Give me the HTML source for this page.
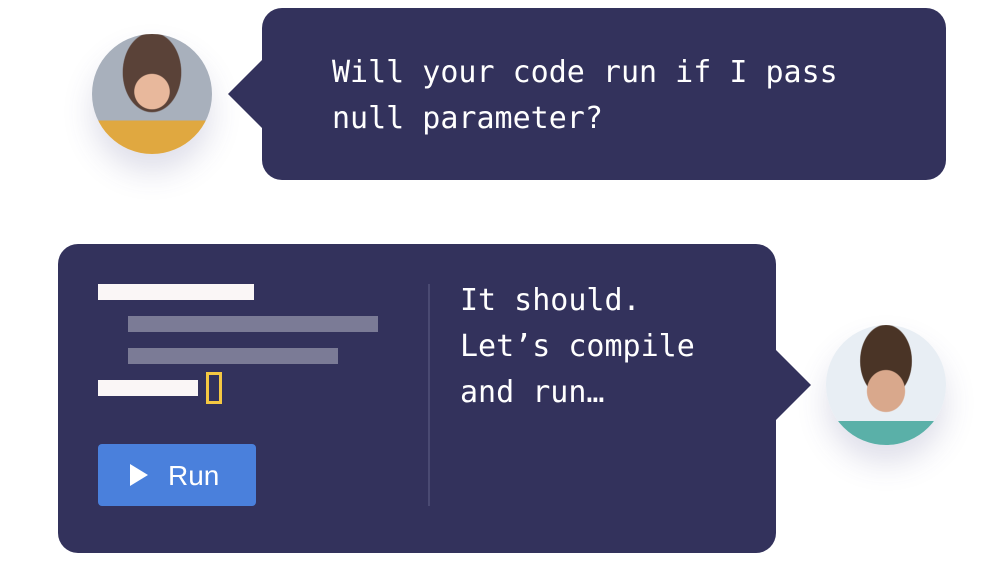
<!DOCTYPE html><html><head><style>
body{margin:0;width:1004px;height:570px;background:#fff;position:relative;overflow:hidden;font-family:"DejaVu Sans Mono","Liberation Mono",monospace}
.b{position:absolute;background:#33325c;border-radius:20px}
.a{position:absolute;width:0;height:0;border-top:35px solid transparent;border-bottom:35px solid transparent}
.t{position:absolute;color:#fff;font-size:30px;line-height:46px;white-space:pre}
.r{position:absolute}
.av{position:absolute;width:120px;height:120px;border-radius:50%;box-shadow:0 18px 30px rgba(80,80,140,.18);overflow:hidden}
</style></head><body>
<div class="b" style="left:262px;top:8px;width:684px;height:172px"></div>
<div class="a" style="left:228px;top:59px;border-right:35px solid #33325c"></div>
<div class="t" style="left:332px;top:50px">Will your code run if I pass
null parameter?</div>
<div class="av" style="left:92px;top:34px;background:radial-gradient(circle at 50% 48%,#e8b89c 0 20%,transparent 21%),radial-gradient(ellipse at 50% 32%,#5a4238 0 34%,transparent 35%),linear-gradient(#a8b0bc 0 72%,#e0a840 72%)"></div>
<div class="b" style="left:58px;top:244px;width:718px;height:309px"></div>
<div class="a" style="left:776px;top:350px;border-left:35px solid #33325c"></div>
<div class="r" style="left:98px;top:284px;width:156px;height:16px;background:#faf6f6"></div>
<div class="r" style="left:128px;top:316px;width:250px;height:16px;background:#7b7b96"></div>
<div class="r" style="left:128px;top:348px;width:210px;height:16px;background:#7b7b96"></div>
<div class="r" style="left:98px;top:380px;width:100px;height:16px;background:#faf6f6"></div>
<div class="r" style="left:206px;top:372px;width:10px;height:26px;border:3px solid #f5c842"></div>
<div class="r" style="left:98px;top:444px;width:158px;height:62px;background:#4a80dc;border-radius:4px"></div>
<div class="r" style="left:130px;top:464px;width:0;height:0;border-top:11px solid transparent;border-bottom:11px solid transparent;border-left:18px solid #fff"></div>
<div class="r" style="left:168px;top:460px;color:#fff;font:28px 'Liberation Sans',sans-serif">Run</div>
<div class="r" style="left:428px;top:284px;width:2px;height:222px;background:#4a4a72"></div>
<div class="t" style="left:460px;top:278px">It should.
Let’s compile
and run…</div>
<div class="av" style="left:826px;top:325px;background:radial-gradient(ellipse at 50% 55%,#d9a88c 0 22%,transparent 23%),radial-gradient(ellipse at 50% 30%,#4a3426 0 30%,transparent 31%),linear-gradient(#e8eef4 0 80%,#5ab0a8 80%)"></div>
</body></html>
